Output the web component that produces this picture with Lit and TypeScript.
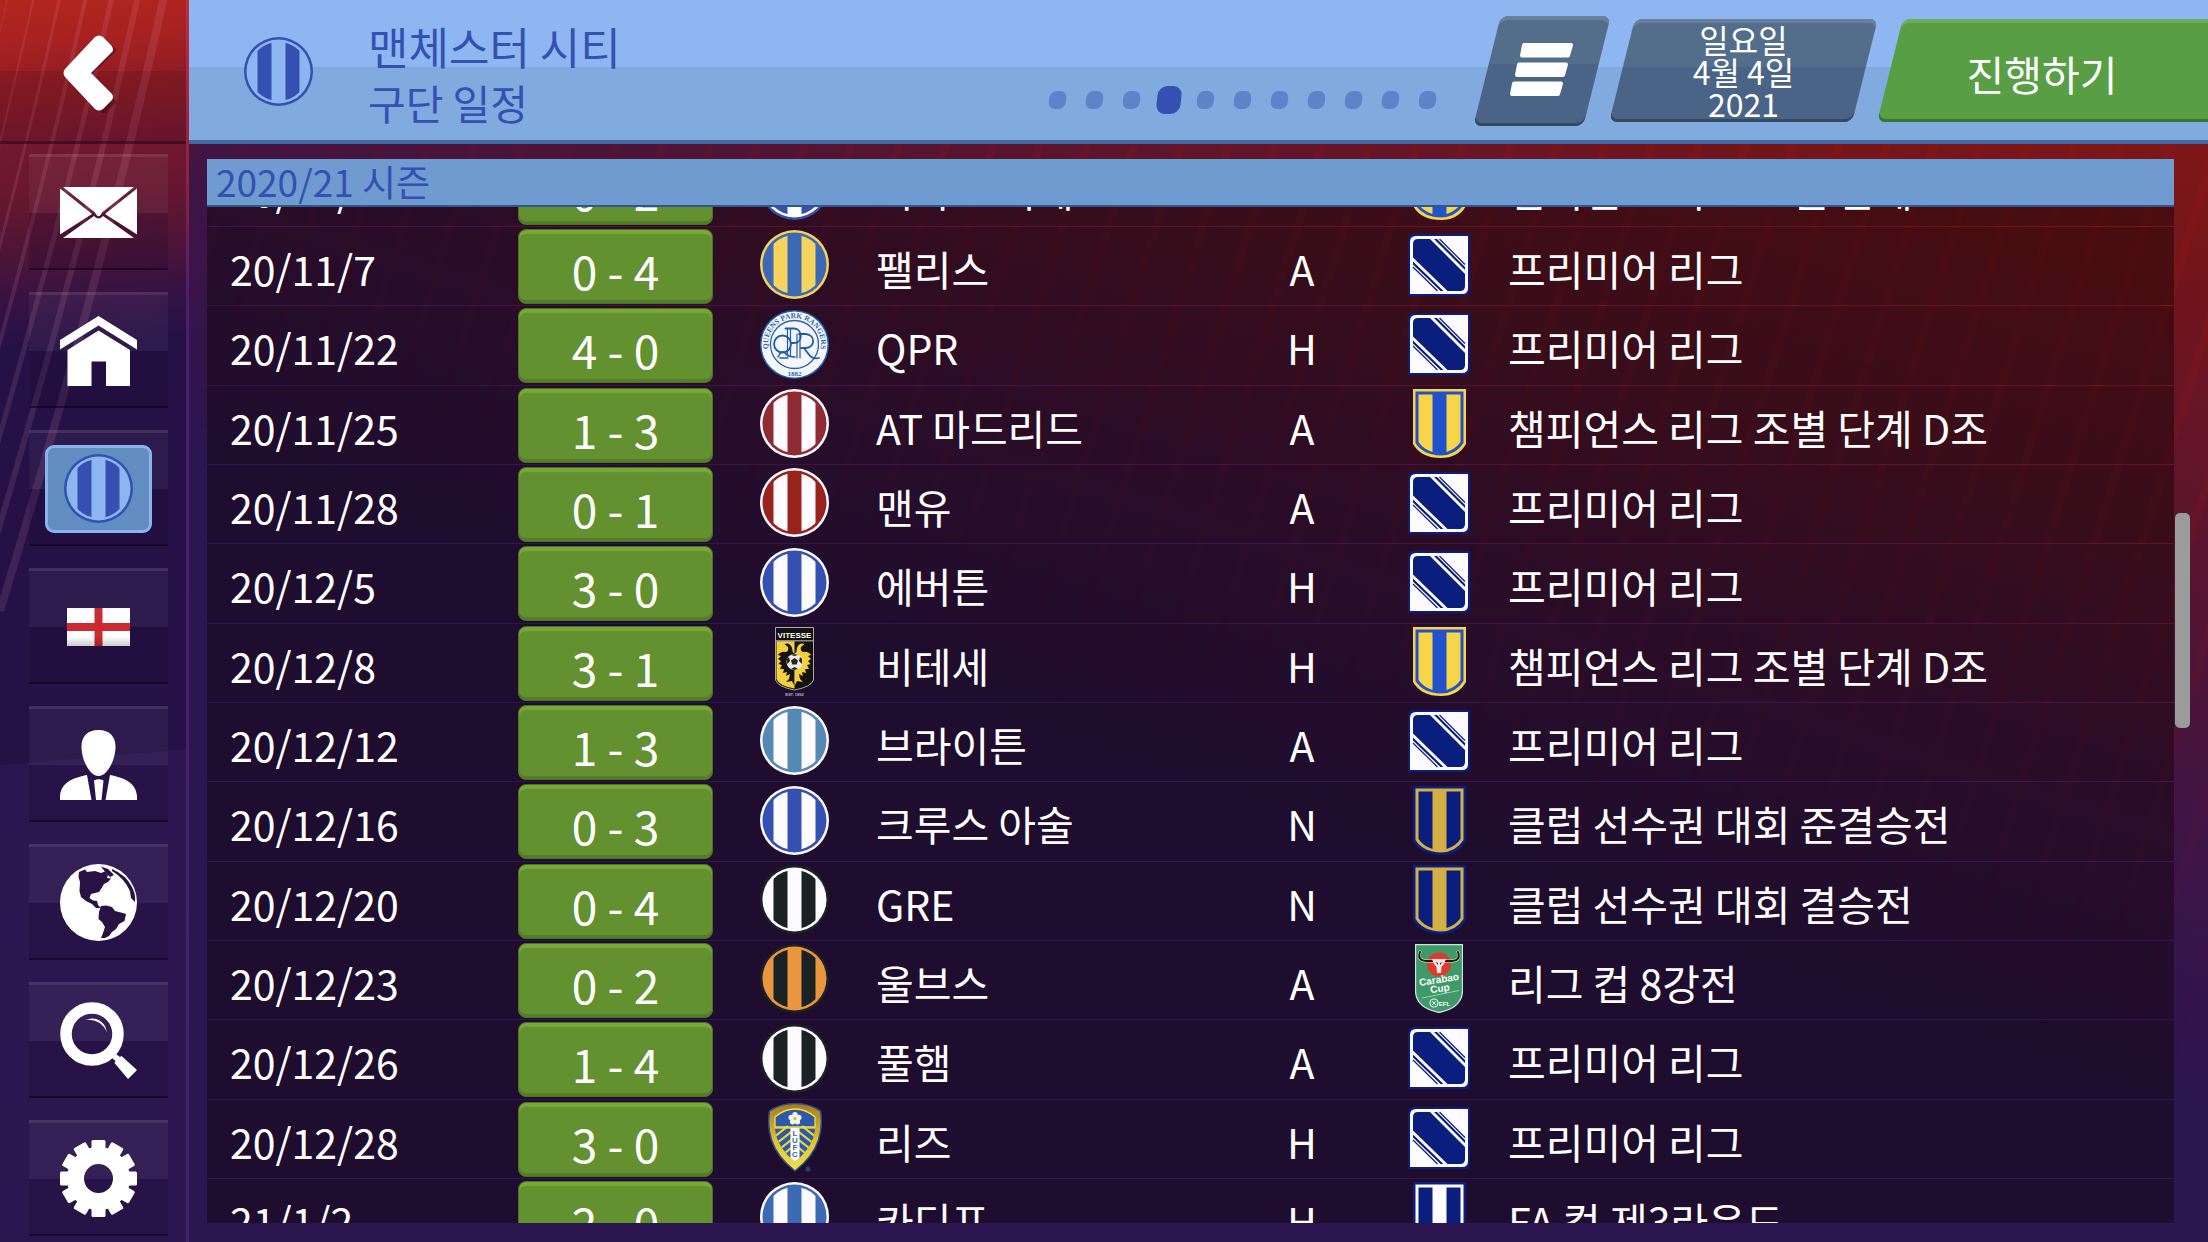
import { LitElement, html, css, svg, nothing } from "lit";
import { customElement, property } from "lit/decorators.js";
import { classMap } from "lit/directives/class-map.js";

type Palette = { ring: string; base: string; stripe: string };

const ROYAL = "#3450b0";
const WHITE = "#fdfbff";
const INK = "#1b2223";
const NAVY = "#0a1f7d";

const PALETTES: Record<string, Palette> = {
  city: { ring: ROYAL, base: "#8db5f0", stripe: ROYAL },
  palace: { ring: "#f5d35c", base: "#3b69b3", stripe: "#f5d35c" },
  atletico: { ring: WHITE, base: "#8f2b33", stripe: WHITE },
  united: { ring: WHITE, base: "#97231d", stripe: WHITE },
  royal: { ring: WHITE, base: ROYAL, stripe: WHITE },
  brighton: { ring: WHITE, base: "#5589b3", stripe: WHITE },
  cardiff: { ring: WHITE, base: "#3d6bb3", stripe: WHITE },
  mono: { ring: INK, base: WHITE, stripe: INK },
  wolves: { ring: INK, base: "#e9963f", stripe: INK },
  kyiv: { ring: ROYAL, base: WHITE, stripe: ROYAL },
  champions: { ring: "#f6d548", base: "#2251cc", stripe: "#f6d548" },
  clubWorld: { ring: NAVY, base: "#d4af45", stripe: NAVY },
  faCup: { ring: NAVY, base: WHITE, stripe: NAVY },
};

/** Round club crest with two vertical stripes. */
const roundCrest = (p: Palette) => html`
  <svg class="crest" viewBox="0 0 69 69" width="69" height="69" aria-hidden="true">
    <clipPath id="c"><circle cx="34.5" cy="34.5" r="29.5" /></clipPath>
    <circle cx="34.5" cy="34.5" r="34.5" fill=${p.ring} />
    <circle cx="34.5" cy="34.5" r="32" fill=${p.base} />
    <g clip-path="url(#c)" fill=${p.stripe}>
      <rect x="13.5" y="0" width="14" height="69" />
      <rect x="41.5" y="0" width="14" height="69" />
    </g>
  </svg>`;

/** Flat-topped shield with two vertical stripes. */
const shield = (p: Palette) => html`
  <svg class="crest" viewBox="0 0 53 69" width="53" height="69" aria-hidden="true">
    <path d="M0 0H53V55Q45 69 28 69Q8 69 0 55Z" fill=${p.ring} />
    <path d="M2.5 2.5H50.5V54Q43 66 28 66.5Q10 66 2.5 54Z" fill=${p.base} />
    <path d="M5.5 5.5H19.5V63Q10 60 5.5 53Z" fill=${p.stripe} />
    <path d="M33.5 5.5H47.5V53Q43 60 33.5 63Z" fill=${p.stripe} />
  </svg>`;

const qprCrest = html`
  <svg class="crest" viewBox="0 0 69 69" width="69" height="69" aria-hidden="true">
    <circle cx="34.5" cy="34.5" r="34.5" fill="#1f5da5" />
    <circle cx="34.5" cy="34.5" r="33" fill="#f5f5fb" />
    <circle cx="34.5" cy="34.5" r="24" fill="none" stroke="#2a66ab" stroke-width="1.3" />
    <path id="arc" d="M11.5 47.700A26.5 26.5 0 1 1 57.5 47.700" fill="none" />
    <text class="seal" font-size="7.5" fill="#2a66ab"><textPath href="#arc" startOffset="50%" text-anchor="middle">QUEENS PARK RANGERS</textPath></text>
    <text class="seal" x="34.5" y="65.5" font-size="7" text-anchor="middle" fill="#2a66ab">1882</text>
    <g fill="none" stroke="#1f5da5" stroke-width="1.8" stroke-linecap="round">
      <circle cx="22.5" cy="34" r="8.5" />
      <path d="M27.500 19V46M30.500 19V46" stroke-width="1.2" />
      <path d="M25.500 18.500H34C43 19 43 33 34 33H31" />
      <path d="M37 24V48M40 24V48" stroke-width="1.2" />
      <path d="M39 24H46C56 25 55 38 46 38H41M44 38C49 45 52 50 59 48" />
      <path d="M18 47Q22 39 25 43T35 47M20 48H28" stroke-width="1.5" />
    </g>
  </svg>`;

const vitesseCrest = html`
  <svg class="crest" viewBox="0 0 39 69" width="39" height="69" aria-hidden="true">
    <path d="M.5.5H38.5V53Q36 60 19.5 63Q3 60 .5 53Z" fill="#15130f" />
    <path d="M1.5 14H19.5V61.5Q4 59 1.5 52Z" fill="#f3d13c" />
    <rect x="1" y="13" width="37" height="1.5" fill="#8b8a85" />
    <text class="badge-text" x="19.5" y="10.5" font-size="8" text-anchor="middle" fill="#fff">VITESSE</text>
    <path d="M19.5 27Q17 25 17 21Q15 15 9.5 17L13 20Q14 24 11 25Q6 24 3 28L6 29L3 32L6 34L3.5 37L7 38L5 42L9 42L8 46L12 45L11 49L15 47L14 52L11 55L17 54L19.5 59Z" fill="#15130f" />
    <path d="M19.5 27Q22 25 22 21Q24 15 29.5 17L26 20Q25 24 28 25Q33 24 36 28L33 29L36 32L33 34L35.5 37L32 38L34 42L30 42L31 46L27 45L28 49L24 47L25 52L28 55L22 54L19.5 59Z" fill="#f3d13c" />
    <circle cx="19.5" cy="35" r="8" fill="#eceae6" />
    <path d="M19.5 31L23 33.5L21.7 37.5H17.3L16 33.5ZM12 32L14 30L15 34L12 37ZM27 32L25 30L24 34L27 37ZM16 42L19.5 40L23 42L19.5 43ZM16 28L19.5 29L23 28L19.5 27Z" fill="#26241f" />
    <path d="M.5.5H38.5V53Q36 60 19.5 63Q3 60 .5 53Z" fill="none" stroke="#a9a7a3" />
    <text class="badge-text" x="19.5" y="69" font-size="4" text-anchor="middle" fill="#b9b3bf">EST. 1892</text>
  </svg>`;

const leedsCrest = html`
  <svg class="crest" viewBox="0 0 54 69" width="54" height="69" aria-hidden="true">
    <defs>
      <linearGradient id="g" x1="0" y1="0" x2="0" y2="1"><stop offset="0" stop-color="#a5791f" /><stop offset=".55" stop-color="#e0c136" /><stop offset="1" stop-color="#f0e244" /></linearGradient>
      <clipPath id="in"><path d="M7 24V14Q16 6 27 6T47 14V24Q47 42 27 59Q7 42 7 24Z" /></clipPath>
    </defs>
    <path d="M27 .5Q42 .5 52.5 8Q55 23 50.5 37Q45 54 27 68Q9 54 3.5 37Q-1 23 1.5 8Q12 .5 27 .5Z" fill="url(#g)" stroke="#2a4c8f" stroke-width="1.5" />
    <g clip-path="url(#in)">
      <rect width="54" height="24" fill="#2d5aa8" />
      <rect y="26" width="54" height="40" fill="#2d5aa8" />
      <path d="M0 39L20 23M0 47L27 26M4 52L27 34M8 57L27 42M54 39L34 23M54 47L27 26M50 52L27 34M46 57L27 42" stroke="#ead83f" stroke-width="2.2" />
    </g>
    <path d="M7 24V14Q16 6 27 6T47 14V24Z" fill="none" stroke="#f0e04a" stroke-width="1.3" />
    <g fill="#f4f4f4"><circle cx="27" cy="15.5" r="3" /><circle cx="27" cy="11.8" r="2.7" /><circle cx="30.800" cy="14.5" r="2.7" /><circle cx="29.4" cy="18.7" r="2.7" /><circle cx="24.6" cy="18.7" r="2.7" /><circle cx="23.200" cy="14.5" r="2.7" /></g>
    <circle cx="27" cy="15.5" r="1.6" fill="#c9b44a" />
    <path d="M22.5 25H31.5V55L27 59L22.5 55Z" fill="#fff" />
    <text class="badge-text" font-size="8" text-anchor="middle" fill="#3a66ad"><tspan x="27" y="33">L</tspan><tspan x="27" y="40">U</tspan><tspan x="27" y="47">F</tspan><tspan x="27" y="54">C</tspan></text>
    <circle cx="40" cy="66" r="2.5" fill="#24406f" />
  </svg>`;

const carabaoCrest = html`
  <svg class="crest" viewBox="0 0 48 69" width="48" height="69" aria-hidden="true">
    <path d="M.5.5H47.5V47Q47 64 24 68.5Q1 64 .5 47Z" fill="#3f9a69" stroke="#cfe5d8" stroke-width="1.3" />
    <circle cx="24" cy="20.5" r="12" fill="#e03a2f" />
    <path d="M5 8Q1 18 16 17H32Q47 18 43 8" fill="none" stroke="#e9e6c8" stroke-width="3" stroke-linecap="round" />
    <path d="M5 8Q1 18 16 17H32Q47 18 43 8" fill="none" stroke="#1b1715" stroke-width="2" stroke-linecap="round" />
    <path d="M17 15H31L29 20L26.5 23L26 29H22L21.5 23L19 20Z" fill="#ece7e4" />
    <path d="M20.5 18L23 19V21ZM27.5 18L25 19V21Z" fill="#5a2620" />
    <text class="badge-text" transform="rotate(-9 24 36)" x="24" y="39" font-size="10" text-anchor="middle" fill="#fff">Carabao</text>
    <text class="badge-text" transform="rotate(-9 24 45)" x="25" y="48" font-size="10" text-anchor="middle" fill="#fff">Cup</text>
    <path d="M7 54L44 46.5" stroke="#9bd0b4" stroke-width="1" />
    <circle cx="19" cy="59" r="4" fill="none" stroke="#e3f2ea" stroke-width="1.2" />
    <path d="M17 57L21 61M21 57L17 61" stroke="#e3f2ea" />
    <text class="badge-text" x="29.5" y="61.5" font-size="6" text-anchor="middle" fill="#fff">EFL</text>
  </svg>`;

const premierCrest = html`
  <svg class="crest" viewBox="0 0 62 62" width="62" height="62" aria-hidden="true">
    <path d="M6 0H62V56Q62 62 56 62H0V6Q0 0 6 0Z" fill=${NAVY} />
    <path d="M8 2H60V54Q60 60 54 60H2V8Q2 2 8 2Z" fill=${WHITE} />
    <path d="M10 5H22L57 40V52Q57 57 52 57H39.5L5 23.5V10Q5 5 10 5Z" fill=${NAVY} />
    <path d="M26 5L57 36V33L29 5ZM5 27.5L35.5 57H32.5L5 30.5Z" fill=${NAVY} />
    <path d="M31.5 5L57 30.5M5 33L29.5 57" stroke=${NAVY} stroke-width="1.2" />
  </svg>`;

const crestFor = (key: string) => {
  switch (key) {
    case "qpr": return qprCrest;
    case "vitesse": return vitesseCrest;
    case "leeds": return leedsCrest;
    case "carabao": return carabaoCrest;
    case "premier": return premierCrest;
    case "champions":
    case "clubWorld":
    case "faCup": return shield(PALETTES[key]);
    default: return roundCrest(PALETTES[key]);
  }
};

@customElement("club-crest")
export class ClubCrest extends LitElement {
  @property() kind = "city";
  static styles = css`
    :host { display: inline-flex; }
    .crest { display: block; }
    .seal { font-family: "Liberation Serif", serif; font-weight: 700; }
    .badge-text { font-family: "Liberation Sans", sans-serif; font-weight: 700; }
  `;
  render() { return crestFor(this.kind); }
}

const gearTeeth = Array.from({ length: 12 }, (_, i) => svg`
  <rect x="31.5" y="0" width="14" height="14" rx="1.5" transform="rotate(${i * 30} 38.5 38.5)" />`);

const NAV_ICONS: Record<string, unknown> = {
  mail: html`<svg viewBox="0 0 77 51" width="77" height="51" fill="#fff" aria-hidden="true">
    <path d="M3 0H74L42 25.5Q38.5 33 35 25.5Z" /><path d="M0 1.5L32 27L0 47.5Z" /><path d="M77 1.5L45 27L77 47.5Z" />
    <path d="M3 51L34 29Q38.5 34 43 29L74 51Z" /></svg>`,
  home: html`<svg viewBox="0 0 77 70" width="77" height="70" fill="#fff" aria-hidden="true">
    <path d="M38.5 0L77 24V33.5L38.5 9.5L0 33.5V24Z" /><path d="M38.5 14.5L70 34V70H46V45.5H31.5V70H7.5V34Z" /></svg>`,
  nation: html`<svg viewBox="0 0 63 38" width="63" height="38" aria-hidden="true">
    <defs><linearGradient id="f" x1="0" y1="0" x2="0" y2="1"><stop offset="0" stop-color="#000" stop-opacity=".04" /><stop offset=".1" stop-color="#fff" stop-opacity="0" /><stop offset=".75" stop-color="#000" stop-opacity="0" /><stop offset="1" stop-color="#000" stop-opacity=".2" /></linearGradient></defs>
    <rect width="63" height="38" fill="#fff" /><path d="M27.5 0H35.5V38H27.5ZM0 15H63V23H0Z" fill="#cc2a30" /><rect width="63" height="38" fill="url(#f)" /></svg>`,
  manager: html`<svg viewBox="0 0 77 70" width="77" height="70" fill="#fff" aria-hidden="true">
    <path d="M38.5 0C50 0 56 7 55.5 18C55 31 47 46 38.5 46S22 31 21.5 18C21 7 27 0 38.5 0Z" />
    <path d="M27 45L31.5 70H0V66C1 53 12 48 27 45ZM50 45C65 48 76 53 77 66V70H45.5ZM34 50.5Q38.5 48 43.5 50.5L41.5 70H36Z" /></svg>`,
  world: html`<svg viewBox="0 0 77 77" width="77" height="77" aria-hidden="true">
    <circle cx="38.5" cy="38.5" r="38.5" fill="#fff" />
    <g class="land">
      <path d="M19 8L25 5.5L27 8L35 7L41 9L45 7.5L48 11L47 14L51 14.5L48 18L44 20L41 25L39 28L35 29L31 30L29.5 34L33 36.5L37 37L38 41L41 44L36 44L32 40L26 37L21 33L19.5 27L20 18L18.5 13Z" />
      <path d="M41 42L46 41.5L52 43L55 47L61 48.5L66 50L64.5 57L59 60L56 65L52 68L49 72L45 74H41L43 69L45 63L42 58L38.5 55L39 48Z" />
      <path d="M41 2.5L48 5L54 11L50 13L46 9Z" />
      <path d="M52 5Q66 11 72 23Q76 31 75 38L71 34L70 27Q64 14 52 7Z" />
    </g></svg>`,
  search: html`<svg viewBox="0 0 77 77" width="77" height="77" aria-hidden="true">
    <circle cx="32" cy="32" r="26" fill="none" stroke="#fff" stroke-width="11.5" />
    <path d="M25 18Q38 13 45 24L47 30Q40 16 25 18Z" fill="#fff" />
    <path d="M52 56L56 52L60 55L61.5 54L77 68L68 77L54.5 61L55.5 59Z" fill="#fff" /></svg>`,
  settings: html`<svg viewBox="0 0 77 77" width="77" height="77" fill="#fff" aria-hidden="true">
    ${gearTeeth}<circle cx="38.5" cy="38.5" r="23" fill="none" stroke="#fff" stroke-width="17" /></svg>`,
};

const NAV = [
  { id: "mail", label: "메일" },
  { id: "home", label: "홈" },
  { id: "club", label: "구단" },
  { id: "nation", label: "국가" },
  { id: "manager", label: "감독" },
  { id: "world", label: "세계" },
  { id: "search", label: "검색" },
  { id: "settings", label: "설정" },
];

@customElement("side-nav")
export class SideNav extends LitElement {
  static styles = css`
    :host {
      display: flex; flex-direction: column; position: relative; overflow: hidden;
      background: linear-gradient(175deg, #b3261e 0, #a52121 50px, #8a1c23 95px, #731830 146px, #66172f 200px, #4a1439 262px, #351244 305px, #251145 350px, #251145 762px, #2c164f 763px);
      border-right: 3px solid; border-image: linear-gradient(#b8304a, #8c1f40 190px, #4a1f70 300px, #45206e) 1;
    }
    .rays { position: absolute; inset: 0; width: 186px; height: 660px; }
    .back {
      position: relative; flex: none; height: 144px; border: 0; border-bottom: 3px solid rgb(30 5 20 / .55);
      padding: 4px 6px 0 0; display: grid; place-items: center; cursor: pointer;
      background: linear-gradient(transparent 50%, rgb(40 0 20 / .12) 50%);
    }
    .nav { position: relative; display: flex; flex-direction: column; gap: 22px; padding: 10px 18px 0 29px; }
    .tile {
      flex: none; height: 116px; border: 0; border-top: 3px solid rgb(255 255 255 / .13); border-bottom: 2px solid rgb(12 2 16 / .6);
      padding: 0; display: grid; place-items: center; cursor: pointer;
      background: linear-gradient(rgb(255 255 255 / .045) 56px, rgb(20 4 40 / .18) 56px);
      background-clip: padding-box;
    }
    .plate { display: grid; place-items: center; }
    .active { width: 101px; height: 82px; border: 3px solid #8ab3ee; border-radius: 9px; background: #628dc0; }
    .land { fill: #271242; }
    svg { display: block; }
  `;
  render() {
    const widths = [8, 6, 5, 4, 3, 2, 1];
    return html`
      <svg class="rays" viewBox="0 0 186 660" aria-hidden="true">
        ${widths.map((w, i) => svg`<path d="M0 0Q-59 270 -164 615" transform="translate(${164 - i * 26} -4)" fill="none" stroke="#f0a0c0" stroke-opacity=".13" stroke-width=${w} />`)}
      </svg>
      <button class="back" aria-label="뒤로">
        <svg viewBox="0 0 56 80" width="56" height="80" aria-hidden="true">
          <path d="M40 14L13 40L40 66" transform="translate(2 3)" fill="none" stroke="#3a0a12" stroke-opacity=".5" stroke-width="18" stroke-linejoin="round" stroke-linecap="square" />
          <path d="M33 4Q37 1 41 4L49 12Q53 17 49 20L29 40L49 60Q53 64 49 68L41 76Q37 79 33 76L3 44Q0 40 3 36Z" fill="#fff" />
        </svg>
      </button>
      <nav class="nav">
        ${NAV.map((n) => html`
          <button class="tile" aria-label=${n.label} aria-current=${n.id === "club" ? "page" : nothing}>
            <span class=${classMap({ plate: true, active: n.id === "club" })}>
              ${n.id === "club" ? html`<club-crest kind="city"></club-crest>` : NAV_ICONS[n.id]}
            </span>
          </button>`)}
      </nav>`;
  }
}

@customElement("top-bar")
export class TopBar extends LitElement {
  static styles = css`
    :host {
      display: flex; align-items: flex-start; height: 144px; box-sizing: border-box; overflow: hidden;
      border-bottom: 4px solid #3f69a3; padding-left: 55px; color: #3450b0;
      background: linear-gradient(#8eb6f0 67px, #81aadf 67px);
    }
    .logo { margin: 37px 55px 0 0; }
    .titles { flex: 1; min-width: 0; padding-top: 18px; white-space: nowrap; }
    h1, p { margin: 0; font-weight: 400; line-height: 56px; }
    h1 { font-size: 44px; }
    p { font-size: 41px; }
    .dots { flex: none; display: flex; align-items: center; gap: 10px; height: 28px; margin: 86px 46px 0 0; }
    .dot { width: 27px; height: 28px; border: 0; padding: 0; background: none; display: grid; place-items: center; cursor: pointer; }
    .dot::before { content: ""; width: 17px; height: 18px; border-radius: 7px; background: #5c84c9; transform: skewX(-6deg); }
    .dot.on::before { width: 24px; height: 28px; border-radius: 9px; background: #3450b0; }
    .actions { flex: none; display: flex; gap: 25px; padding-top: 19px; }
    .slab {
      position: relative; isolation: isolate; box-sizing: border-box; border: 0; padding: 0; background: none; color: #fff;
      font: inherit; height: 103px; cursor: pointer; display: grid; place-items: center;
    }
    .slab::before {
      content: ""; position: absolute; inset: 0; z-index: -1; transform: skewX(-14deg); border-radius: 8px;
      background: linear-gradient(#536e8a 48px, #4a6488 48px);
      box-shadow: inset 0 4px 0 #6a7f9e, inset 0 -3px 0 #35495f;
    }
    .menu { width: 110px; height: 110px; margin-top: -3px; padding-bottom: 4px; }
    .date { width: 243px; font-size: 32px; line-height: 32px; }
    .date span { display: block; }
    .go { width: 318px; font-size: 41px; padding: 4px 14px 0 0; }
    .go::before { right: -40px; background: #579e45; box-shadow: inset 0 4px 0 #6cad5c, inset 0 -3px 0 #3c7530; }
    svg { display: block; }
  `;
  render() {
    return html`
      <club-crest class="logo" kind="city"></club-crest>
      <div class="titles"><h1>맨체스터 시티</h1><p>구단 일정</p></div>
      <div class="dots">
        ${Array.from({ length: 11 }, (_, i) => html`<button class=${classMap({ dot: true, on: i === 3 })} aria-label=${`${i + 1}`}></button>`)}
      </div>
      <div class="actions">
        <button class="slab menu" aria-label="메뉴">
          <svg viewBox="0 0 64 53" width="64" height="53" fill="#fff" stroke="#fff" stroke-width="4" stroke-linejoin="round" aria-hidden="true">
            <path d="M14 2H61L58 12.5H12Z" /><path d="M9 21.5H56L53 32H7Z" /><path d="M4 40.5H51L48 51H2Z" />
          </svg>
        </button>
        <button class="slab date"><div><span>일요일</span><span>4월 4일</span><span>2021</span></div></button>
        <button class="slab go">진행하기</button>
      </div>`;
  }
}

type Fixture = [date: string, score: string, crest: string, team: string, venue: string, comp: string, compName: string];

const PL = "프리미어 리그";
const CL = "챔피언스 리그 조별 단계 D조";

const FIXTURES: Fixture[] = [
  ["20/11/4", "0 - 2", "kyiv", "디나모 키예프", "A", "champions", CL],
  ["20/11/7", "0 - 4", "palace", "팰리스", "A", "premier", PL],
  ["20/11/22", "4 - 0", "qpr", "QPR", "H", "premier", PL],
  ["20/11/25", "1 - 3", "atletico", "AT 마드리드", "A", "champions", CL],
  ["20/11/28", "0 - 1", "united", "맨유", "A", "premier", PL],
  ["20/12/5", "3 - 0", "royal", "에버튼", "H", "premier", PL],
  ["20/12/8", "3 - 1", "vitesse", "비테세", "H", "champions", CL],
  ["20/12/12", "1 - 3", "brighton", "브라이튼", "A", "premier", PL],
  ["20/12/16", "0 - 3", "royal", "크루스 아술", "N", "clubWorld", "클럽 선수권 대회 준결승전"],
  ["20/12/20", "0 - 4", "mono", "GRE", "N", "clubWorld", "클럽 선수권 대회 결승전"],
  ["20/12/23", "0 - 2", "wolves", "울브스", "A", "carabao", "리그 컵 8강전"],
  ["20/12/26", "1 - 4", "mono", "풀햄", "A", "premier", PL],
  ["20/12/28", "3 - 0", "leeds", "리즈", "H", "premier", PL],
  ["21/1/2", "2 - 0", "cardiff", "카디프", "H", "faCup", "FA 컵 제3라운드"],
];

@customElement("fixture-list")
export class FixtureList extends LitElement {
  static styles = css`
    :host { display: grid; grid-template-columns: minmax(0, 1fr) 16px; grid-template-rows: 48px minmax(0, 1fr); min-height: 0; }
    h2 {
      margin: 0; box-sizing: border-box; padding: 0 9px; font-size: 37px; font-weight: 400; line-height: 44px; color: #3450b0;
      background: #709bd1; border-bottom: 2px solid #2f568f;
    }
    .scroller { grid-row: 2; overflow: auto; scrollbar-width: none; min-height: 0; }
    .scroller::-webkit-scrollbar { display: none; }
    table { width: 100%; table-layout: fixed; border-collapse: separate; border-spacing: 0; color: #fff; }
    .c-date { width: 311px; }
    .c-score { width: 195px; }
    .c-crest { width: 163px; }
    .c-team { width: 358px; }
    .c-venue { width: 136px; }
    .c-logo { width: 138px; }
    td {
      box-sizing: border-box; height: 79px; padding: 0; font-size: 41px; line-height: 68px; white-space: nowrap;
      border-top: 1px solid transparent; background: rgb(12 2 2 / .42); background-clip: padding-box; vertical-align: middle;
    }
    tr:nth-child(3n) td { height: 80px; }
    .date, .team, .comp, .venue { padding-top: 3px; }
    .date { padding-left: 23px; }
    .venue { text-align: center; }
    .score {
      display: block; width: 100%; height: 75px; box-sizing: border-box; border: 1px solid #4b7222; border-radius: 8px; padding: 7px 0 0;
      font: inherit; font-size: 46px; line-height: 60px; color: #fff; cursor: pointer;
      background: #63912f; box-shadow: inset 0 4px 1px #77a838, inset 0 -3px 0 #547d28;
    }
    .mark { text-align: center; line-height: 0; font-size: 0; padding-bottom: 3px; }
    club-crest { vertical-align: middle; }
    .track { grid-column: 2; grid-row: 2; display: grid; grid-template-rows: 306fr 216fr 495fr; padding-left: 1px; }
    .thumb { grid-row: 2; background: #9b9b9c; border-radius: 5px; }
  `;
  firstUpdated() {
    const box = this.renderRoot.querySelector(".scroller");
    if (box) box.scrollTop = 60;
  }
  render() {
    return html`
      <h2 id="season">2020/21 시즌</h2>
      <div class="scroller">
        <table aria-labelledby="season">
          <colgroup>
            <col class="c-date" /><col class="c-score" /><col class="c-crest" /><col class="c-team" /><col class="c-venue" /><col class="c-logo" /><col />
          </colgroup>
          <tbody>
            ${FIXTURES.map(([date, score, crest, team, venue, comp, name]) => html`
              <tr>
                <td class="date">${date}</td>
                <td><button class="score">${score}</button></td>
                <td class="mark"><club-crest kind=${crest}></club-crest></td>
                <td class="team">${team}</td>
                <td class="venue">${venue}</td>
                <td class="mark"><club-crest kind=${comp}></club-crest></td>
                <td class="comp">${name}</td>
              </tr>`)}
          </tbody>
        </table>
      </div>
      <div class="track"><div class="thumb"></div></div>`;
  }
}

@customElement("app-root")
export class AppRoot extends LitElement {
  static styles = css`
    :host {
      display: grid; grid-template-columns: 189px minmax(0, 1fr); height: 100vh; overflow: hidden;
      font-family: "Noto Sans CJK KR", "Noto Sans", sans-serif; background: #2c164f;
    }
    main { display: flex; flex-direction: column; min-width: 0; min-height: 0; }
    .stage {
      flex: 1; min-height: 0; display: grid; padding: 15px 18px 19px 18px; position: relative; isolation: isolate;
      background: linear-gradient(198deg, #7e1718 0, #74151a 120px, #681524 243px, #5b152b 370px, #4e1436 498px, #421442 621px, #37154a 760px, #2c164f 920px);
    }
    .stage::before {
      content: ""; position: absolute; inset: 0; z-index: -1;
      background: repeating-linear-gradient(107deg, rgb(200 20 20 / .1) 0 8px, transparent 8px 45px);
      mask-image: linear-gradient(198deg, #000 0, #000 300px, transparent 900px);
    }
  `;
  render() {
    return html`
      <side-nav></side-nav>
      <main>
        <top-bar></top-bar>
        <div class="stage"><fixture-list></fixture-list></div>
      </main>`;
  }
}
